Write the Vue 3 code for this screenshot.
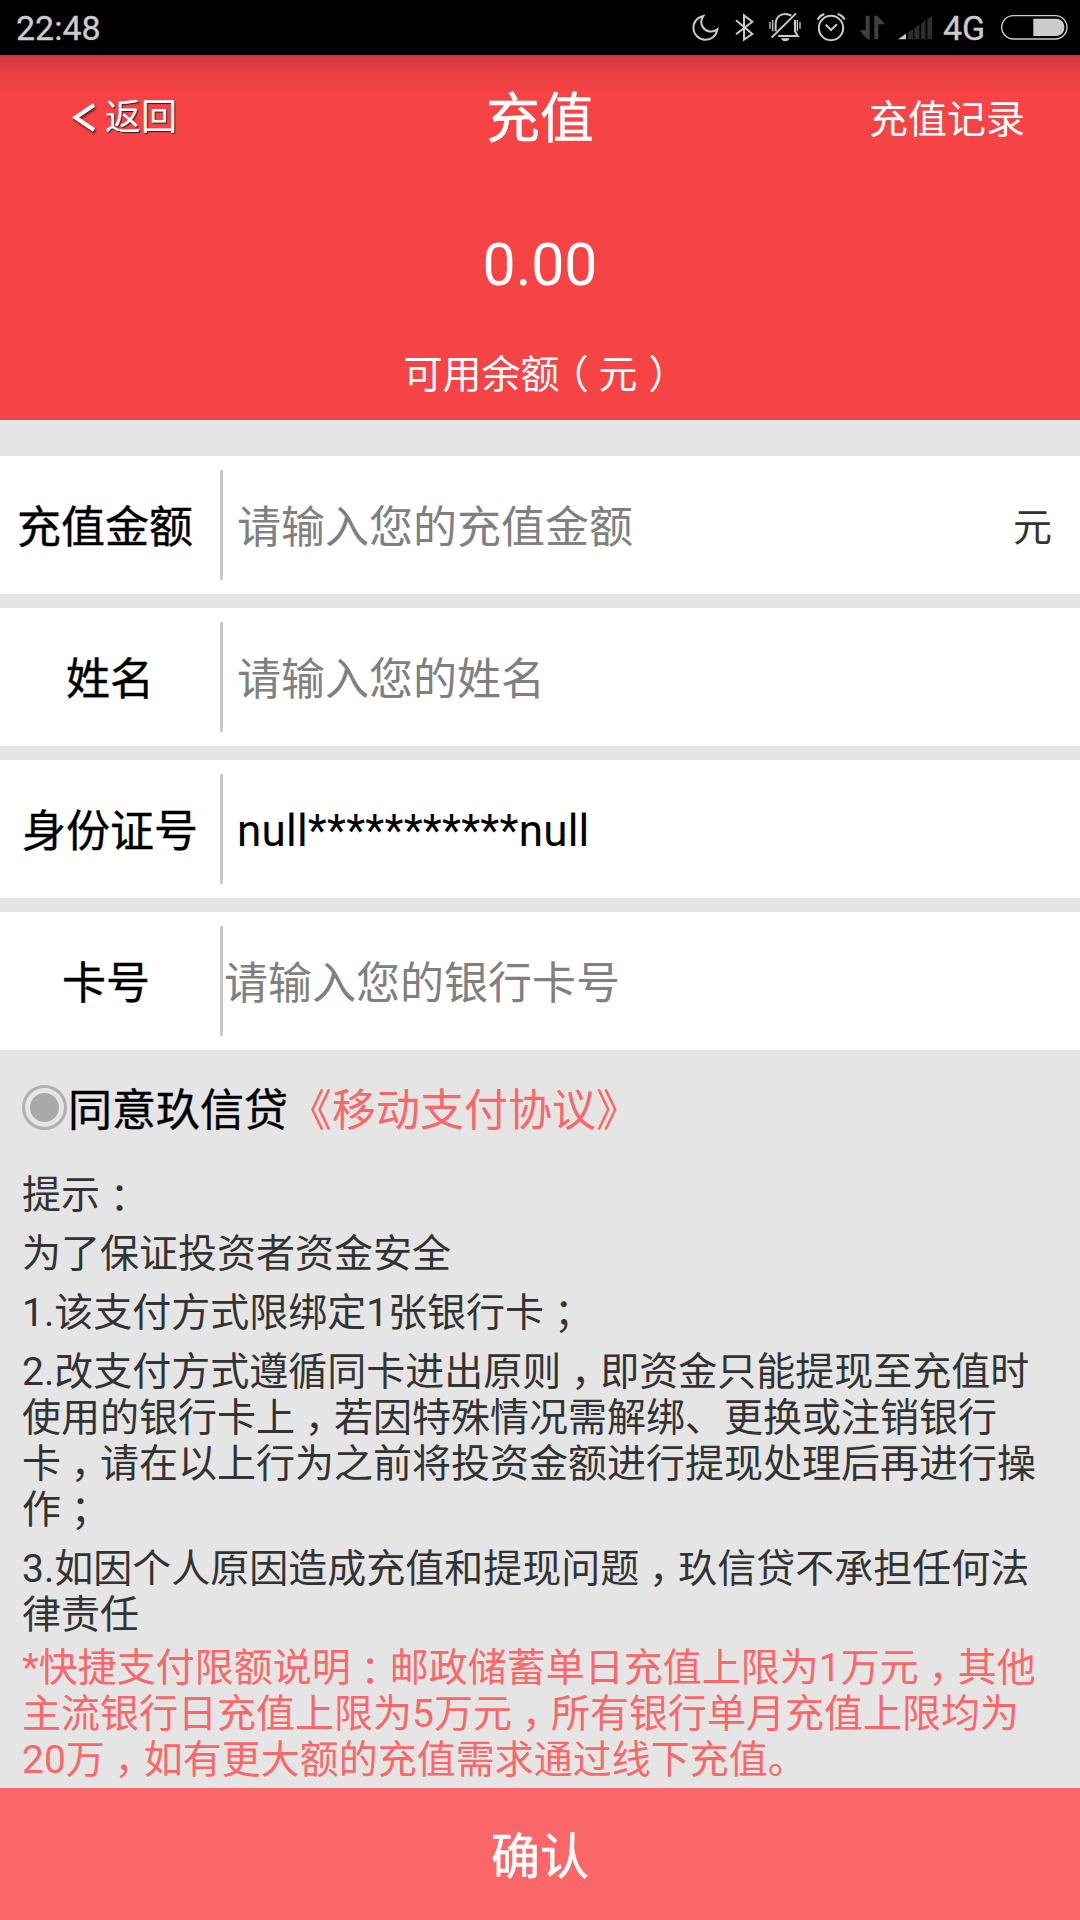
<script setup>
import { ref } from 'vue'

const rows = ref([
  { key: 'amount', label: '充值金额', hint: '请输入您的充值金额', value: '', unit: '元' },
  { key: 'name', label: '姓名', hint: '请输入您的姓名', value: '' },
  { key: 'idno', label: '身份证号', hint: '', value: 'null***********null' },
  { key: 'card', label: '卡号', hint: '请输入您的银行卡号', value: '' }
])

const tips = [
  ['提示：'],
  ['为了保证投资者资金安全'],
  ['1.该支付方式限绑定1张银行卡；'],
  [
    '2.改支付方式遵循同卡进出原则，即资金只能提现至充值时',
    '使用的银行卡上，若因特殊情况需解绑、更换或注销银行',
    '卡，请在以上行为之前将投资金额进行提现处理后再进行操',
    '作；'
  ],
  ['3.如因个人原因造成充值和提现问题，玖信贷不承担任何法', '律责任']
]

const limits = [
  '*快捷支付限额说明：邮政储蓄单日充值上限为1万元，其他',
  '主流银行日充值上限为5万元，所有银行单月充值上限均为',
  '20万，如有更大额的充值需求通过线下充值。'
]

// Full-width punctuation is split out so it can be centred in its cell
const split = (line) => line.split(/([，；：])/).filter(Boolean)
const isMark = (part) => /^[，；：]$/.test(part)
</script>

<template>
  <div class="page">
    <div class="status">
      <span class="clock">22:48</span>
      <div class="icons">
        <svg width="38" height="55" viewBox="60 0 114 165"><path class="ln" d="M100 48A36 36 0 1 0 142 88C127 100 108 95 99 82C91 70 94 57 100 48Z" /></svg>
        <svg width="34" height="55" viewBox="174 0 102 165"><path class="ln" d="M198 61L247 102L222 119V46L247 65L198 103" /></svg>
        <svg width="46" height="55" viewBox="276 0 138 165">
          <path class="ln" d="M317 94V70C318 53 329 42 346 42C353 42 359 44 364 47M375 60V94L383 108H325M378 40L305 113" />
          <path class="thin" d="M300 66V86M308 60V94M382 60V94M390 66V86" />
          <path class="fill" d="M333 115H359C357 121 352 124 346 124S335 121 333 115Z" />
        </svg>
        <svg width="44" height="55" viewBox="414 0 132 165">
          <circle class="ln" cx="483" cy="84" r="36.5" />
          <path class="ln" d="M467 74L483 90L501 73M443 59C447 51 454 45 463 42M524 59C520 51 513 45 503 42" />
        </svg>
        <svg width="40" height="55" viewBox="546 0 120 165"><path fill="#404040" d="M587 47H599V118H592L569 91H587ZM613 118V47H622L645 73H625V118Z" /></svg>
        <svg width="49" height="55" viewBox="666 0 147 165">
          <path class="fill" d="M684 118L708 101V118Z" />
          <path fill="#2d2d2d" d="M714 118V97L729 87V118ZM733 118V84L748 74V118ZM753 118V71L767 61V118ZM772 118V58L786 48V118Z" />
        </svg>
        <span class="net">4G</span>
        <svg width="80" height="55" viewBox="975 0 240 165">
          <rect x="992" y="47" width="196" height="70" rx="35" fill="none" stroke="#ccc" stroke-width="4" />
          <path class="fill" d="M1087 56H1155C1171 56 1180 67 1180 82S1171 108 1155 108H1087Z" />
        </svg>
      </div>
    </div>

    <header class="hero">
      <nav class="bar">
        <a class="back">
          <svg width="26" height="34" viewBox="0 0 26 34"><path d="M23 4L4.500 16.500L23 29" fill="none" stroke="#fff" stroke-width="4" /></svg>
          <span>返回</span>
        </a>
        <h1>充值</h1>
        <a class="log">充值记录</a>
      </nav>
      <div class="balance">0.00</div>
      <div class="caption">可用余额<span class="open">（</span>元<span class="close">）</span></div>
    </header>

    <section class="form">
      <div v-for="row in rows" :key="row.key" class="row" :class="row.key">
        <label>{{ row.label }}</label>
        <i class="rule"></i>
        <input v-model="row.value" :placeholder="row.hint" type="text" />
        <span v-if="row.unit" class="unit">{{ row.unit }}</span>
      </div>
    </section>

    <div class="agree">
      <span class="radio"><i></i></span>
      <span>同意玖信贷</span><a>《移动支付协议》</a>
    </div>

    <section class="tips">
      <p v-for="(tip, i) in tips" :key="i">
        <span v-for="line in tip" :key="line" class="line"><span v-for="(part, j) in split(line)" :key="j" :class="{ mark: isMark(part), colon: part === '：' }">{{ part }}</span></span>
      </p>
      <p class="limits">
        <span v-for="line in limits" :key="line" class="line"><span v-for="(part, j) in split(line)" :key="j" :class="{ mark: isMark(part), colon: part === '：' }">{{ part }}</span></span>
      </p>
    </section>

    <button class="confirm">确认</button>
  </div>
</template>

<style>
body {
  margin: 0;
  background: #e5e5e5;
}
</style>

<style scoped>
.page {
  display: flex;
  flex-direction: column;
  width: 1080px;
  height: 1920px;
  overflow: hidden;
  background: #e5e5e5;
  font-family: Roboto, "Noto Sans CJK SC", sans-serif;
  font-size: 39px;
  color: #333;
  white-space: nowrap;
}
.page > * {
  flex-shrink: 0;
}
.status {
  display: flex;
  justify-content: space-between;
  height: 55px;
  padding: 0 4px 0 16px;
  background: #000;
  color: #ccc;
  font-size: 34px;
  line-height: 57px;
  -webkit-text-stroke: 0.3px currentColor;
}
.icons {
  display: flex;
}
.icons svg {
  display: block;
  flex: none;
}
.icons svg:first-child {
  margin-right: 0;
}
.net {
  width: 55px;
  padding-left: 2px;
  box-sizing: border-box;
}
.ln {
  fill: none;
  stroke: #ccc;
  stroke-width: 6;
}
.thin {
  fill: none;
  stroke: #ccc;
  stroke-width: 4;
}
.fill {
  fill: #ccc;
}
.hero {
  height: 365px;
  background: linear-gradient(#c5373a 0, #d93b3e 4px, #e93f42 18px, #f64346 38px);
  color: #fff;
  text-align: center;
}
.bar {
  display: grid;
  grid-template-columns: 1fr auto 1fr;
  align-items: center;
  height: 125px;
  padding: 0 55px 0 71px;
}
.back {
  display: flex;
  align-items: center;
  gap: 8px;
  font-size: 36px;
  line-height: 50px;
  text-shadow: 1px 1px 1px #222;
}
.back svg {
  filter: drop-shadow(1px 2px 1px #5a1a1b);
}
h1 {
  margin: 4px 0 0 -16px;
  font-size: 54px;
  font-weight: 400;
  line-height: 70px;
  -webkit-text-stroke: 0.5px currentColor;
}
.log {
  margin-bottom: 4px;
  text-align: right;
}
.balance {
  height: 70px;
  margin-top: 50px;
  font-size: 59px;
  line-height: 70px;
}
.caption {
  margin-top: 45px;
  line-height: 60px;
}
.open,
.close,
.mark {
  padding: 0 0.25em;
  font-feature-settings: "halt";
}
.close {
  padding: 0 0.22em 0 0.28em;
}
.colon {
  vertical-align: -2px;
  line-height: 1;
}
.form {
  display: flex;
  flex-direction: column;
  gap: 14px;
  margin-top: 36px;
}
.row {
  display: flex;
  align-items: center;
  height: 138px;
  background: #fff;
  font-size: 44px;
  color: #000;
}
label {
  box-sizing: border-box;
  width: 220px;
  padding-top: 6px;
  text-align: center;
  line-height: 60px;
  -webkit-text-stroke: 0.4px currentColor;
}
.amount label {
  padding-right: 10px;
}
.card label {
  padding-right: 8px;
}
.rule {
  width: 3px;
  height: 110px;
  background: #c8c8c8;
}
input {
  flex: 1;
  min-width: 0;
  box-sizing: border-box;
  height: 66px;
  margin: 0;
  padding: 6px 0 0 14px;
  border: 0;
  outline: 0;
  background: none;
  font: inherit;
  color: #000;
}
.idno input {
  padding-top: 3px;
  letter-spacing: 0.22px;
}
.card input {
  padding-left: 1px;
}
input::placeholder {
  color: #808080;
  opacity: 1;
}
.unit {
  padding: 0 28px 2px 0;
  font-size: 39px;
  color: #333;
}
.agree {
  display: flex;
  align-items: center;
  height: 60px;
  margin-top: 31px;
  padding-left: 22px;
  font-size: 44px;
  line-height: 60px;
  color: #000;
}
.agree span {
  -webkit-text-stroke: 0.4px currentColor;
}
.agree a {
  color: #fa6768;
}
.radio {
  display: flex;
  align-items: center;
  justify-content: center;
  box-sizing: border-box;
  width: 45px;
  height: 45px;
  margin: 0 1px 7px 0;
  border: 3px solid #b0b0b0;
  border-radius: 50%;
}
.radio i {
  width: 29px;
  height: 29px;
  border-radius: 50%;
  background: #a9a9a9;
}
.tips {
  flex: 1 1 0;
  min-height: 0;
  margin-top: 31px;
  padding-left: 22px;
}
.tips p {
  margin: 0 0 13px;
  line-height: 46px;
}
.line {
  display: block;
  height: 46px;
}
.tips .limits {
  margin-top: -6px;
  color: #fa6768;
}
.confirm {
  height: 132px;
  padding: 0 0 4px;
  border: 0;
  background: #fa6768;
  color: #fff;
  font: inherit;
  font-size: 49px;
  -webkit-text-stroke: 0.5px currentColor;
}
</style>
